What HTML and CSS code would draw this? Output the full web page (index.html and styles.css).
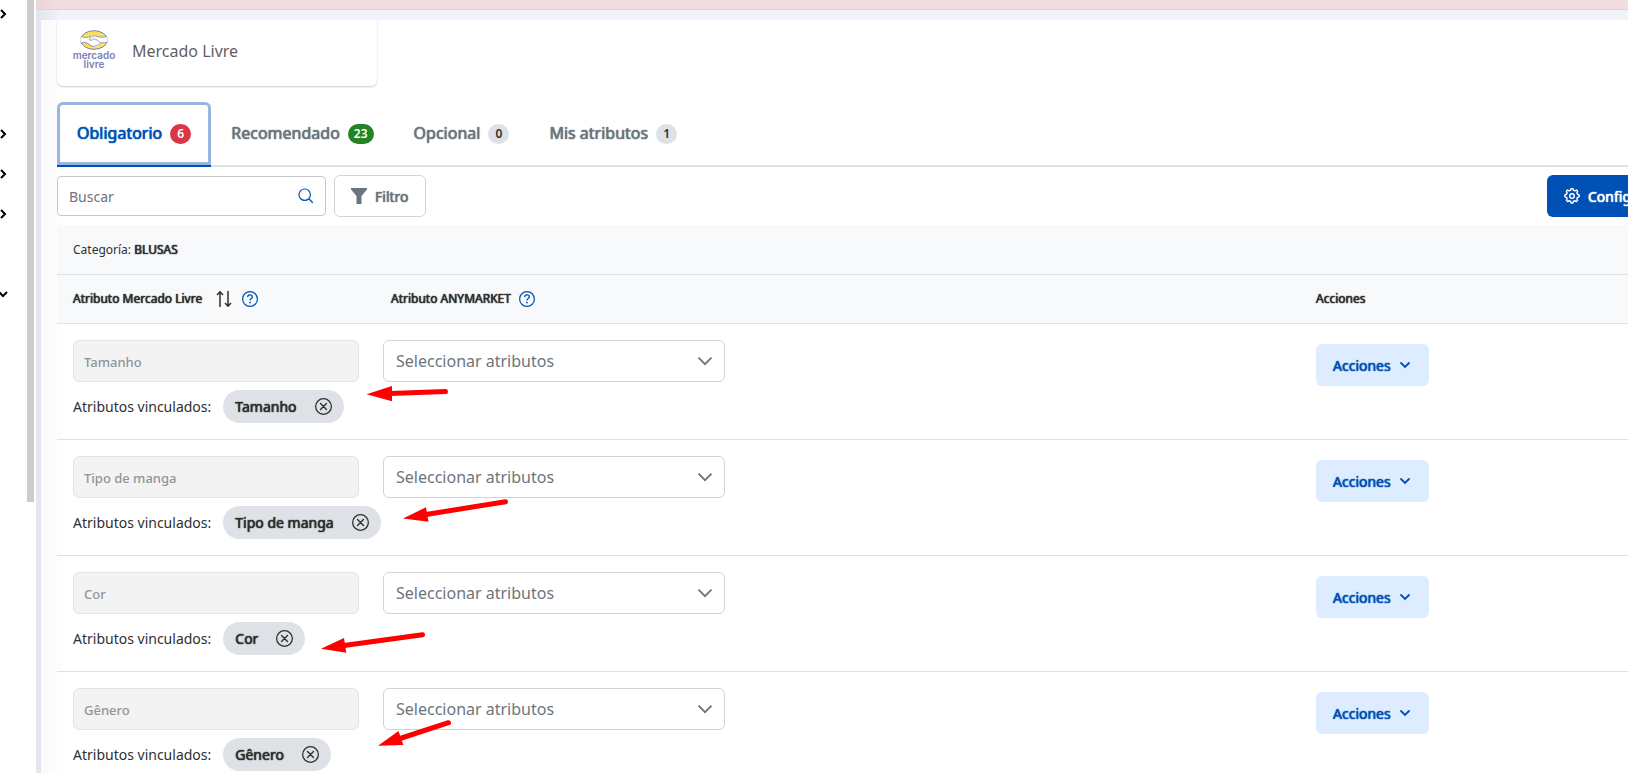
FILE: index.html
```html
<!DOCTYPE html>
<html lang="es">
<head>
  <meta charset="utf-8">
  <title>Atributos - Mercado Livre</title>
  <link rel="stylesheet" href="styles.css">
</head>
<body>
  <svg class="sprite" aria-hidden="true">
    <symbol id="chevron-right" viewBox="0 0 8 12"><path d="M1 2l4 4-4 4" fill="none" stroke="currentColor" stroke-width="2"/></symbol>
    <symbol id="chevron-down" viewBox="0 0 12 8"><path d="M2 2l4 4 4-4" fill="none" stroke="currentColor" stroke-width="1.8" stroke-linecap="round"/></symbol>
    <symbol id="select-arrow" viewBox="0 0 16 16"><path d="M1.5 4.7L8 11.2l6.500-6.500" fill="none" stroke="currentColor" stroke-width="1.800"/></symbol>
    <symbol id="help" viewBox="0 0 16 16"><circle cx="8" cy="8" r="7.400" fill="none" stroke="currentColor" stroke-width="1.200"/><path d="M5.700 6.100c0-1.300 1-2.200 2.300-2.200s2.300.8 2.300 2c0 1.700-2.300 1.700-2.300 3.500" fill="none" stroke="currentColor" stroke-width="1.300"/><circle cx="8" cy="11.600" r=".9" fill="currentColor"/></symbol>
    <symbol id="remove" viewBox="0 0 16 16"><circle cx="8" cy="8" r="7.400" fill="none" stroke="currentColor" stroke-width="1.200"/><path d="M5.200 5.200l5.600 5.600M10.800 5.200l-5.600 5.600" stroke="currentColor" stroke-width="1.300" stroke-linecap="round"/></symbol>
  </svg>

  <div class="app">
    <nav class="sidebar">
      <button class="side-item" aria-label="Menu 1"><svg width="8" height="12"><use href="#chevron-right"/></svg></button>
      <span class="side-item"></span>
      <span class="side-item"></span>
      <button class="side-item" aria-label="Menu 2"><svg width="8" height="12"><use href="#chevron-right"/></svg></button>
      <button class="side-item" aria-label="Menu 3"><svg width="8" height="12"><use href="#chevron-right"/></svg></button>
      <button class="side-item" aria-label="Menu 4"><svg width="8" height="12"><use href="#chevron-right"/></svg></button>
      <span class="side-item"></span>
      <button class="side-item" aria-label="Menu 5"><svg width="8" height="8" viewBox="0 0 8 8"><path d="M-1 2l4 4 4-4" fill="none" stroke="currentColor" stroke-width="2"/></svg></button>
    </nav>
    <div class="scroll-thumb"></div>

    <main class="main">
      <div class="alert-bar"></div>
      <section class="panel">
        <div class="marketplace">
          <svg class="logo" viewBox="0 0 46 42" width="46" height="42" role="img" aria-label="Mercado Livre">
            <g transform="translate(0 -1)">
              <ellipse cx="23" cy="11" rx="13.500" ry="9.300" fill="#f8e05a" stroke="#7b80b4" stroke-width="1"/>
              <path d="M10 7.500c4 1.500 7 1 10-.2 2-.8 4-.7 6 0 3 1.200 6 1.300 10 .2.800 2.200.8 4.500 0 6.200-3-.2-5 .5-7 2-2 1.800-5 3-7.500 1.600-2-1.800-4-3.600-6-3.700-2-.2-4 .2-5.500.100-1-1.700-1-4 0-6.200z" fill="#fff"/>
              <path d="M10 7.500c4 1.500 7 1 10-.2M36 7.500c-4 1.100-7 1-10-.2-2-.8-4-.5-5.500 1l-2.500 2.200c1.500 1.200 3.500.8 5-.8 2.500.5 5 2.800 7 4.500M10 13.700c3-.2 5-.4 7 1 2 1.500 3 2.600 5 2.600 2.500 0 5-1.200 7-2.600 2-1.200 4-1.300 7-1" fill="none" stroke="#7b80b4" stroke-width=".8"/>
            </g>
            <text class="logo-text" text-anchor="middle"><tspan x="23" y="29">mercado</tspan><tspan x="23" y="38">livre</tspan></text>
          </svg>
          <span>Mercado Livre</span>
        </div>

        <div class="tabs" role="tablist">
          <button class="tab active" role="tab" aria-selected="true">Obligatorio <span class="badge red">6</span></button>
          <button class="tab" role="tab">Recomendado <span class="badge green">23</span></button>
          <button class="tab" role="tab">Opcional <span class="badge">0</span></button>
          <button class="tab" role="tab">Mis atributos <span class="badge">1</span></button>
        </div>

        <div class="toolbar">
          <label class="search">
            <input type="text" placeholder="Buscar" aria-label="Buscar">
            <svg width="16" height="16" viewBox="0 0 16 16"><circle cx="6.700" cy="6.700" r="5.700" fill="none" stroke="currentColor" stroke-width="1.200"/><path d="M10.800 10.800l4 4" stroke="currentColor" stroke-width="1.400"/></svg>
          </label>
          <button class="btn-filter">
            <svg width="16" height="16" viewBox="0 0 16 16"><path d="M0 0h16v1.500L10.500 8v8h-5V8L0 1.500z" fill="currentColor"/></svg>
            Filtro
          </button>
          <button class="btn-config">
            <svg width="16" height="16" viewBox="0.6 0.300 14.800 14.800" fill="none" stroke="currentColor" stroke-width="1.300" stroke-linejoin="round"><path d="M6.700 2.300L7.200.8h1.600l.5 1.500 1.300.6 1.500-.7 1.100 1.100-.7 1.500.6 1.300 1.500.5v1.800l-1.500.5-.6 1.300.7 1.500-1.100 1.100-1.500-.7-1.300.6-.5 1.500H7.200l-.5-1.500-1.300-.6-1.500.7-1.100-1.100.7-1.500-.6-1.300-1.500-.5V6.600l1.500-.5.6-1.300-.7-1.500 1.100-1.100 1.500.7z"/><circle cx="8" cy="7.700" r="2.100"/></svg>
            Configurar
          </button>
        </div>

        <table class="attributes">
          <colgroup>
            <col class="col-attr">
            <col>
            <col class="col-actions">
          </colgroup>
          <thead>
            <tr>
              <td colspan="3">Categoría: <b>BLUSAS</b></td>
            </tr>
            <tr>
              <th>
                <div class="head-cell">
                  Atributo Mercado Livre
                  <svg class="sort" width="16" height="16" viewBox="0 0 16 16" fill="none" stroke="currentColor" stroke-width="1.500"><path d="M4 16V1M1 4l3-3.200L7 4M12 0v15M9 12l3 3.200L15 12"/></svg>
                  <svg class="help" width="16" height="16"><use href="#help"/></svg>
                </div>
              </th>
              <th>
                <div class="head-cell">
                  Atributo ANYMARKET
                  <svg class="help" width="16" height="16"><use href="#help"/></svg>
                </div>
              </th>
              <th>Acciones</th>
            </tr>
          </thead>
          <tbody>
            <tr>
              <td>
                <input class="attr-name" type="text" value="Tamanho" aria-label="Atributo" disabled>
                <div class="linked">Atributos vinculados: <span class="chip">Tamanho <button aria-label="Quitar Tamanho"><svg width="17" height="17"><use href="#remove"/></svg></button></span></div>
              </td>
              <td>
                <div class="select"><select aria-label="Seleccionar atributos"><option>Seleccionar atributos</option></select><svg width="16" height="16"><use href="#select-arrow"/></svg></div>
              </td>
              <td><button class="btn-actions">Acciones <svg width="12" height="8"><use href="#chevron-down"/></svg></button></td>
            </tr>
            <tr>
              <td>
                <input class="attr-name" type="text" value="Tipo de manga" aria-label="Atributo" disabled>
                <div class="linked">Atributos vinculados: <span class="chip">Tipo de manga <button aria-label="Quitar Tipo de manga"><svg width="17" height="17"><use href="#remove"/></svg></button></span></div>
              </td>
              <td>
                <div class="select"><select aria-label="Seleccionar atributos"><option>Seleccionar atributos</option></select><svg width="16" height="16"><use href="#select-arrow"/></svg></div>
              </td>
              <td><button class="btn-actions">Acciones <svg width="12" height="8"><use href="#chevron-down"/></svg></button></td>
            </tr>
            <tr>
              <td>
                <input class="attr-name" type="text" value="Cor" aria-label="Atributo" disabled>
                <div class="linked">Atributos vinculados: <span class="chip">Cor <button aria-label="Quitar Cor"><svg width="17" height="17"><use href="#remove"/></svg></button></span></div>
              </td>
              <td>
                <div class="select"><select aria-label="Seleccionar atributos"><option>Seleccionar atributos</option></select><svg width="16" height="16"><use href="#select-arrow"/></svg></div>
              </td>
              <td><button class="btn-actions">Acciones <svg width="12" height="8"><use href="#chevron-down"/></svg></button></td>
            </tr>
            <tr>
              <td>
                <input class="attr-name" type="text" value="Gênero" aria-label="Atributo" disabled>
                <div class="linked">Atributos vinculados: <span class="chip">Gênero <button aria-label="Quitar Gênero"><svg width="17" height="17"><use href="#remove"/></svg></button></span></div>
              </td>
              <td>
                <div class="select"><select aria-label="Seleccionar atributos"><option>Seleccionar atributos</option></select><svg width="16" height="16"><use href="#select-arrow"/></svg></div>
              </td>
              <td><button class="btn-actions">Acciones <svg width="12" height="8"><use href="#chevron-down"/></svg></button></td>
            </tr>
          </tbody>
        </table>
      </section>
    </main>
  </div>

  <!-- red arrows over the rows -->
  <svg class="arrows" width="520" height="773" viewBox="0 0 520 773" fill="#f00" stroke="#f00" stroke-width="5" stroke-linecap="round">
    <path d="M390 393.500L445.500 391.500"/><path stroke="none" d="M366.500 394.300L392 386v15.200z"/>
    <path d="M426 514.500L505.500 501.700"/><path stroke="none" d="M403 518.500L426 507.300l2.500 14.500z"/>
    <path d="M344 645.500L422.500 634.700"/><path stroke="none" d="M321 648.700L344 638l2.300 14.700z"/>
    <path d="M400 738.500L448.500 722.700"/><path stroke="none" d="M378 745.700L398.500 731l4.800 14z"/>
  </svg>
</body>
</html>
```

FILE: styles.css
```css
* {
  box-sizing: border-box;
}
body {
  margin: 0;
  height: 100vh;
  overflow: hidden;
  background: #fff;
  color: #2f2f2f;
  font-family: "Noto Sans", sans-serif;
  font-size: 14px;
}
button, input, select {
  font-family: inherit;
  font-size: 14px;
}
button {
  border: 0;
  padding: 0;
  background: none;
  cursor: pointer;
}
svg {
  flex: none;
}
.sprite {
  display: none;
}

.app {
  display: flex;
  height: 100vh;
  overflow: hidden;
}

/* sidebar */
.sidebar {
  width: 27px;
  flex: none;
  margin-top: -6px;
  color: #111;
}
.side-item {
  display: flex;
  align-items: center;
  width: 100%;
  height: 40px;
}
.scroll-thumb {
  width: 7px;
  height: 65%;
  flex: none;
  margin-right: 2px;
  background: #ccc;
}

/* main */
.main {
  flex: 1;
  min-width: 0;
  overflow: hidden;
  background: linear-gradient(90deg, #e4e6ef 5px, #f0f3f9 24px);
}
.alert-bar {
  height: 10px;
  background: linear-gradient(90deg, #ead6da, #f2dede 24px);
  border-bottom: 1px solid #ebccd1;
}
.panel {
  margin: 10px -72px 0 5px;
  padding: 0 16px;
  background: linear-gradient(90deg, #f9f9fa, #fff 24px);
}
.marketplace {
  display: flex;
  align-items: center;
  gap: 15px;
  width: 320px;
  height: 66px;
  padding: 0 14px 4px;
  border-radius: 0 0 6px 6px;
  box-shadow: 0 1px 2px rgba(0, 0, 0, 0.2);
  clip-path: inset(0 -4px -4px -4px);
  color: #5f5f5f;
  font-size: 16px;
}
.logo-text {
  font-family: Inter, sans-serif;
  font-size: 10px;
  font-weight: 600;
  fill: #7b80b4;
}

/* tabs */
.tabs {
  display: flex;
  margin-top: 16px;
  border-bottom: 2px solid #dee2e6;
}
.tab {
  display: flex;
  align-items: center;
  gap: 8px;
  height: 65px;
  margin-bottom: -2px;
  padding: 0 20px 2px;
  border-bottom: 2px solid transparent;
  color: #6c757d;
  font-size: 16px;
}
.tab, .btn-filter, .btn-config, .btn-actions, .chip, .attributes th, .attributes b {
  font-weight: 400;
  text-shadow: 0 0 1px currentColor, 0 0 1px currentColor;
}
.tab.active {
  color: #0051b5;
  border-bottom-color: #0051b5;
  border-radius: 6px 6px 0 0;
  box-shadow: inset 0 0 0 3px #98b7de;
}
.badge {
  min-width: 21px;
  height: 20px;
  margin-top: 2px;
  padding: 0 6px;
  border-radius: 10px;
  background: #dee2e6;
  color: #2f2f2f;
  font-size: 12px;
  font-weight: 600;
  line-height: 20px;
  text-align: center;
  text-shadow: none;
}
.badge.red {
  background: #dc3545;
  color: #fff;
}
.badge.green {
  background: #228422;
  color: #fff;
}

/* toolbar */
.toolbar {
  display: flex;
  align-items: center;
  gap: 8px;
  padding: 8px 0;
}
.search {
  display: flex;
  align-items: center;
  width: 269px;
  height: 40px;
  padding: 0 11px;
  border: 1px solid #c6c8ca;
  border-radius: 4px;
  background: #fff;
  color: #0051b5;
}
.search input {
  flex: 1;
  min-width: 0;
  padding: 0;
  border: 0;
  outline: 0;
  background: none;
}
.search input::placeholder {
  color: #6c757d;
}
.btn-filter, .btn-config {
  display: flex;
  align-items: center;
  gap: 8px;
  height: 42px;
  padding: 0 16px;
  border-radius: 6px;
}
.btn-filter {
  border: 1px solid #ced4da;
  background: #fff;
  color: #6c757d;
}
.btn-config {
  min-width: 137px;
  margin-left: auto;
  padding-left: 17px;
  background: #0051b5;
  color: #fff;
}

/* table */
.attributes {
  width: 100%;
  table-layout: fixed;
  border-collapse: collapse;
}
.col-attr {
  width: 318px;
}
.col-actions {
  width: 384px;
}
.attributes tr {
  border-bottom: 1px solid #dee2e6;
}
.attributes thead {
  background: #f8f9fb;
  font-size: 12px;
}
.attributes thead tr {
  height: 49px;
}
.attributes th {
  padding: 0 16px;
  text-align: left;
}
.attributes thead td {
  padding: 0 16px;
}
.head-cell {
  display: flex;
  align-items: center;
  gap: 8px;
}
.sort {
  margin: 0 2px 0 6px;
}
.help {
  color: #0051b5;
}
.attributes tbody td {
  padding: 16px;
  vertical-align: top;
}
.attributes tbody td:nth-child(2) {
  padding-left: 8px;
}
.attributes tbody td:nth-child(3) {
  padding-top: 20px;
}
.attr-name {
  display: block;
  width: 100%;
  height: 42px;
  padding: 2px 10px 0;
  border: 1px solid #e2e4e6;
  border-radius: 6px;
  background: #f3f3f3;
  color: #8f9499;
  font-size: 13px;
  font-weight: 500;
}
.linked {
  display: flex;
  align-items: center;
  gap: 12px;
  margin-top: 8px;
  white-space: nowrap;
}
.chip {
  display: flex;
  align-items: center;
  gap: 18px;
  height: 33px;
  padding: 0 12px;
  border-radius: 17px;
  background: #dee2e6;
}
.chip button {
  display: flex;
  color: #2f2f2f;
}
.select {
  display: grid;
  align-items: center;
  width: 342px;
  color: #6c757d;
}
.select select {
  grid-area: 1 / 1;
  height: 42px;
  padding: 0 40px 0 12px;
  border: 1px solid #ced4da;
  border-radius: 6px;
  background: #fff;
  color: inherit;
  font-size: 16px;
  appearance: none;
}
.select svg {
  grid-area: 1 / 1;
  justify-self: end;
  margin-right: 12px;
  pointer-events: none;
}
.btn-actions {
  display: flex;
  align-items: center;
  gap: 8px;
  height: 42px;
  padding: 2px 18px 0 17px;
  border-radius: 6px;
  background: #deecff;
  color: #0051b5;
}
.btn-actions svg {
  margin-bottom: 2px;
}

.arrows {
  position: absolute;
  top: 0;
  left: 0;
  pointer-events: none;
}
```
